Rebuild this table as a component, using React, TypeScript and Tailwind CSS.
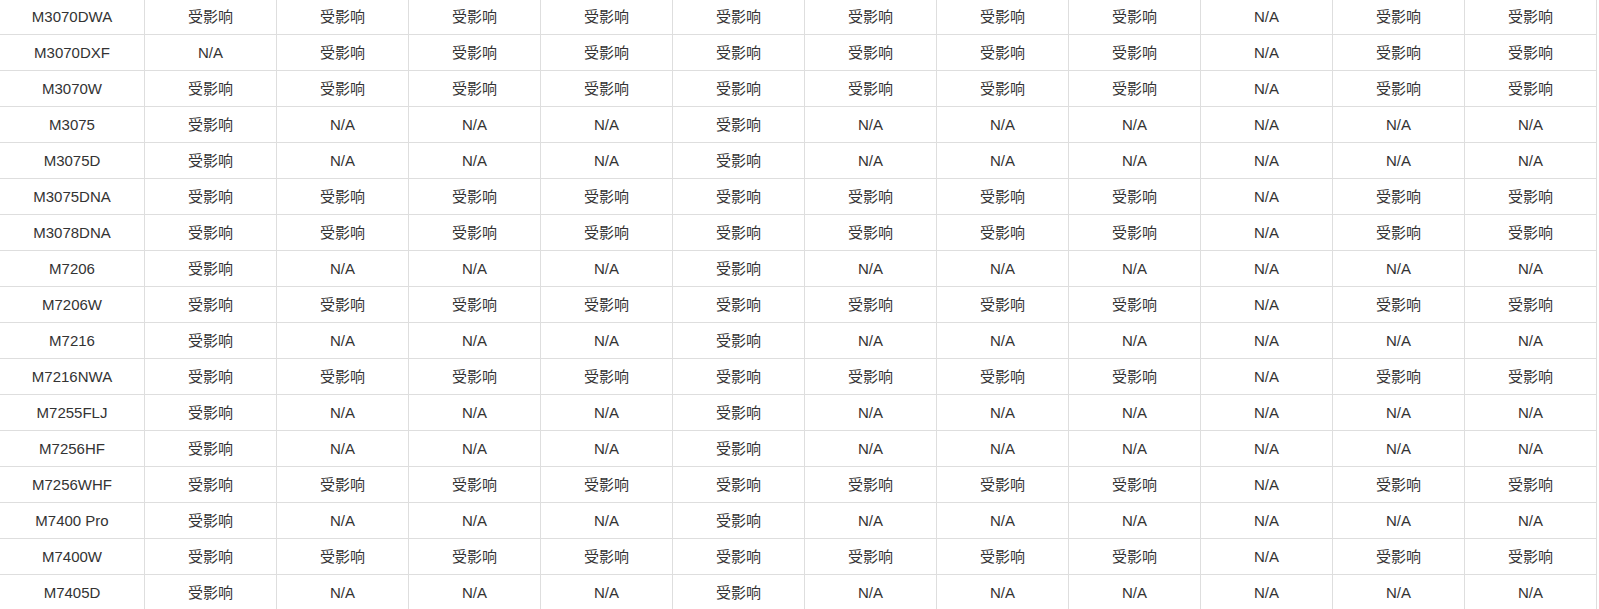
import React from "react";

const Y = "受影响";
const N = "N/A";

const full = [Y, Y, Y, Y, Y, Y, Y, Y, N, Y, Y];
const few = [Y, N, N, N, Y, N, N, N, N, N, N];

const rows: [string, string[]][] = [
  ["M3070DWA", full],
  ["M3070DXF", [N, Y, Y, Y, Y, Y, Y, Y, N, Y, Y]],
  ["M3070W", full],
  ["M3075", few],
  ["M3075D", few],
  ["M3075DNA", full],
  ["M3078DNA", full],
  ["M7206", few],
  ["M7206W", full],
  ["M7216", few],
  ["M7216NWA", full],
  ["M7255FLJ", few],
  ["M7256HF", few],
  ["M7256WHF", full],
  ["M7400 Pro", few],
  ["M7400W", full],
  ["M7405D", few],
];

const Cell = ({ text }: { text: string }) => (
  <div className="h-9 pt-0.5 flex items-center justify-center border-b border-r border-[#dedede]">
    {text}
  </div>
);

const App = () => {
  return (
    <main className="w-[1599px] h-[609px] overflow-hidden bg-white">
      <div
        className="-mt-px w-[1597px] grid grid-cols-[145px_repeat(11,132px)] text-[15px] text-[#333]"
        style={{ fontFamily: '"Liberation Sans", "Noto Sans CJK SC", sans-serif' }}
      >
        {rows.map(([model, cells]) => (
          <React.Fragment key={model}>
            <Cell text={model} />
            {cells.map((c, i) => (
              <Cell key={i} text={c} />
            ))}
          </React.Fragment>
        ))}
      </div>
    </main>
  );
};

export default App;
